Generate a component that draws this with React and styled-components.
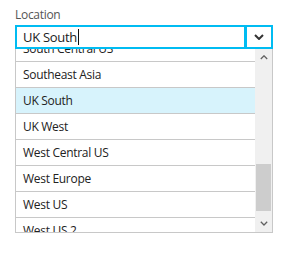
import React, { useEffect, useRef } from "react";
import styled, { createGlobalStyle } from "styled-components";

const GlobalStyle = createGlobalStyle`
  html, body {
    margin: 0;
    padding: 0;
    background: #fff;
  }
  body {
    font-family: "Open Sans", "Noto Sans", sans-serif;
  }
`;

const ROW_HEIGHT = 26;
const VIEW_HEIGHT = 182;
const SCROLL_TOP = 14 * ROW_HEIGHT + 13;

const locations = [
  "Australia East",
  "Australia Southeast",
  "Brazil South",
  "Canada Central",
  "Canada East",
  "Central India",
  "Central US",
  "East Asia",
  "East US",
  "East US 2",
  "Japan East",
  "Japan West",
  "North Central US",
  "North Europe",
  "South Central US",
  "Southeast Asia",
  "UK South",
  "UK West",
  "West Central US",
  "West Europe",
  "West US",
  "West US 2",
];

const Page = styled.div`
  padding: 7px 15px 0 15px;
  width: 258px;
`;

const Label = styled.div`
  font-size: 12px;
  letter-spacing: -0.3px;
  color: #555;
  line-height: 16px;
  margin-bottom: 2px;
`;

const Combo = styled.div`
  display: flex;
  height: 24px;
  box-sizing: border-box;
`;

const Field = styled.div`
  flex: 1;
  display: flex;
  align-items: center;
  box-sizing: border-box;
  border: 2px solid #00bcf2;
  padding-left: 6px;
  font-size: 13px;
  letter-spacing: -0.3px;
  color: #222;
`;

const Caret = styled.span`
  display: inline-block;
  width: 1px;
  height: 16px;
  background: #111;
  margin-left: 1px;
`;

const DropButton = styled.div`
  width: 27px;
  box-sizing: border-box;
  border: 2px solid #00bcf2;
  border-left-width: 1px;
  display: flex;
  align-items: center;
  justify-content: center;
`;

const List = styled.div`
  display: flex;
  height: ${VIEW_HEIGHT + 2}px;
  box-sizing: border-box;
  border: 1px solid #c8c8c8;
  border-top: none;
`;

const Viewport = styled.div`
  flex: 1;
  overflow: hidden;
  height: ${VIEW_HEIGHT + 1}px;
`;

const Row = styled.div`
  height: ${ROW_HEIGHT - 1}px;
  line-height: ${ROW_HEIGHT - 1}px;
  border-bottom: 1px solid #c8c8c8;
  padding-left: 7px;
  font-size: 12px;
  letter-spacing: -0.3px;
  color: #222;
  background: ${(p) => (p.$active ? "#d7f3fc" : "#fff")};
  white-space: nowrap;
`;

const Scrollbar = styled.div`
  width: 17px;
  background: #f0f0f0;
  display: flex;
  flex-direction: column;
`;

const Arrow = styled.div`
  height: 17px;
  display: flex;
  align-items: center;
  justify-content: center;
`;

const Track = styled.div`
  flex: 1;
  position: relative;
`;

const Thumb = styled.div`
  position: absolute;
  left: 1px;
  right: 1px;
  background: #cdcdcd;
`;

const Chevron = ({ up, size = 10, color = "#333", stroke = 2 }) => (
  <svg width={size} height={size * 0.6} viewBox="0 0 10 6">
    <path
      d={up ? "M1 5 L5 1 L9 5" : "M1 1 L5 5 L9 1"}
      fill="none"
      stroke={color}
      strokeWidth={stroke}
    />
  </svg>
);

const App = () => {
  const ref = useRef(null);
  useEffect(() => {
    if (ref.current) ref.current.scrollTop = SCROLL_TOP;
  }, []);

  const contentHeight = locations.length * ROW_HEIGHT;
  const trackHeight = VIEW_HEIGHT - 34;
  const thumbHeight = Math.round((VIEW_HEIGHT / contentHeight) * trackHeight);
  const maxScroll = contentHeight - VIEW_HEIGHT;
  const thumbTop = Math.round(
    (SCROLL_TOP / maxScroll) * (trackHeight - thumbHeight)
  );

  return (
    <>
      <GlobalStyle />
      <Page>
        <Label>Location</Label>
        <Combo>
          <Field>
            UK South
            <Caret />
          </Field>
          <DropButton>
            <Chevron size={10} />
          </DropButton>
        </Combo>
        <List>
          <Viewport ref={ref}>
            {locations.map((name) => (
              <Row key={name} $active={name === "UK South"}>
                {name}
              </Row>
            ))}
          </Viewport>
          <Scrollbar>
            <Arrow>
              <Chevron up size={8} color="#606060" stroke={1.6} />
            </Arrow>
            <Track>
              <Thumb style={{ top: thumbTop, height: thumbHeight }} />
            </Track>
            <Arrow>
              <Chevron size={8} color="#606060" stroke={1.6} />
            </Arrow>
          </Scrollbar>
        </List>
      </Page>
    </>
  );
};

export default App;
